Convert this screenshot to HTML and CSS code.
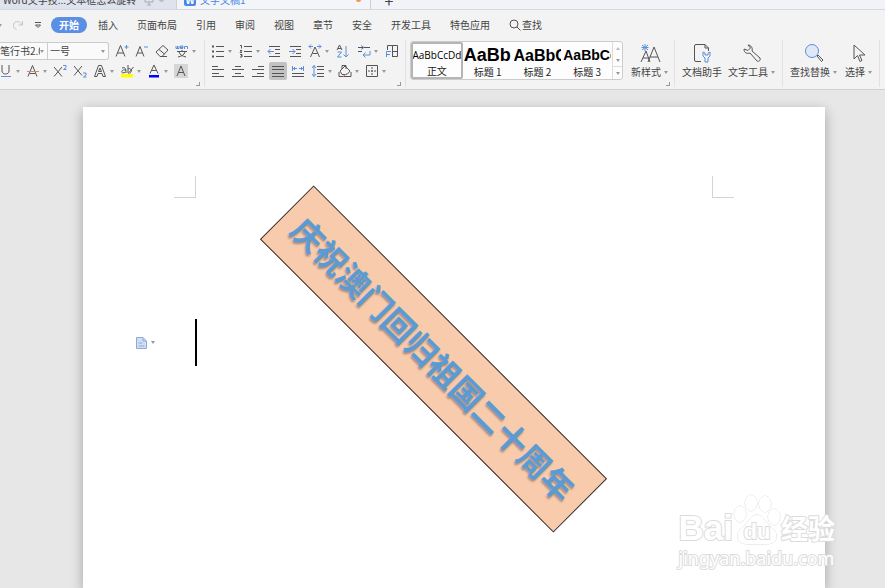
FILE: index.html
```html
<!DOCTYPE html>
<html lang="zh">
<head>
    <meta charset="UTF-8">
    <title>文字文稿1</title>
    <link rel="stylesheet" href="styles.css">
</head>
<body>
    <!-- 文档标签 -->
    <div class="tabs">
        <a href="#" class="tab">
            <span>Word文字技...文本框怎么旋转</span>
            <svg class="tab-screen" width="10" height="12" viewBox="0 0 10 12"><path d="M1 2h8v6H1zM5 8v3M3 11h4"/></svg>
            <i class="dot gray"></i>
        </a>
        <a href="#" class="tab on">
            <b class="logo">W</b>
            <span>文字文稿1</span>
            <i class="dot"></i>
        </a>
        <button class="add" aria-label="新建">+</button>
    </div>

    <!-- 菜单 -->
    <div class="menu">
        <div class="quick">
            <i class="caret"></i>
            <button aria-label="恢复"><svg width="12" height="12" viewBox="0 0 12 12" class="pale"><path d="M10.500 2v4H6.500M10 6C8 1 1 2 1.500 6.500c0 2 1 3 3 4"/></svg></button>
            <button aria-label="自定义"><svg width="8" height="8" viewBox="0 0 8 8"><path d="M1 1.500h6M1.500 4h5L4 6.500z"/></svg></button>
        </div>
        <a href="#" class="on">开始</a>
        <a href="#">插入</a>
        <a href="#">页面布局</a>
        <a href="#">引用</a>
        <a href="#">审阅</a>
        <a href="#">视图</a>
        <a href="#">章节</a>
        <a href="#">安全</a>
        <a href="#">开发工具</a>
        <a href="#">特色应用</a>
        <button class="search"><svg width="12" height="12" viewBox="0 0 12 12"><circle cx="5" cy="5" r="4"/><path d="M8 8l3.500 3.500"/></svg>查找</button>
    </div>

    <!-- 工具栏 -->
    <div class="ribbon">
        <div class="group font">
            <div class="row">
                <div class="selects">
                    <label><select class="family" aria-label="字体"><option>笔行书2.0</option></select><i class="caret"></i></label>
                    <label><select class="size" aria-label="字号"><option>一号</option></select><i class="caret"></i></label>
                </div>
                <button aria-label="增大字号"><svg width="14" height="14" viewBox="0 0 14 14"><path d="M1 12.500L5.500 1.500l4.500 11M2.500 9h6"/><path class="blue" d="M9.500 3h4M11.500 1v4"/></svg></button>
                <button aria-label="减小字号"><svg width="14" height="14" viewBox="0 0 14 14"><path d="M1 12.500L5 2.500l4 10M2.500 9h5"/><path class="blue" d="M9 3h4"/></svg></button>
                <button aria-label="清除格式"><svg width="14" height="14" viewBox="0 0 14 14"><path d="M1 8l7-6.500 5 4.500-6 6.500H5zM4 5.500l5.500 4.500M6 12.500h6"/></svg></button>
                <button aria-label="拼音指南"><svg width="14" height="14" viewBox="0 0 14 14"><path class="blue" d="M1 2v2.500h3V2M2.500 2v2M5.500 3.500H8V2H5.500v2.500H8M9.500 5V2.500h3V5"/><path d="M2 7.500h10M7 6v1M4 8c1 3 3 4 7 5M10 8c-1 3-3 4-7 5"/></svg><i class="caret"></i></button>
            </div>
            <div class="row second">
                <button aria-label="下划线"><svg width="14" height="14" viewBox="0 0 14 14"><path d="M3 1v6c0 4 7 4 7 0V1"/><path class="blue" d="M2 12.500h10"/></svg><i class="caret"></i></button>
                <button aria-label="删除线"><svg width="14" height="14" viewBox="0 0 14 14"><path d="M2 12.500L6.500 1.500 11 12.500M4 9.500h5"/><path class="red" d="M1 7.500h12"/></svg><i class="caret"></i></button>
                <button aria-label="上标"><svg width="14" height="14" viewBox="0 0 14 14"><path d="M1 3l8 9.500M9 3l-8 9.500"/><path class="blue" d="M10 1.500h3v2l-2.500 2H13.500"/></svg></button>
                <button aria-label="下标"><svg width="14" height="14" viewBox="0 0 14 14"><path d="M1 2l8 9.500M9 2l-8 9.500"/><path class="blue" d="M10 9h3v2l-2.500 2H13.500"/></svg></button>
                <button aria-label="文字效果"><svg width="14" height="14" viewBox="0 0 14 14"><path d="M1.500 12.500l4-11h3l4 11h-2.500L9 9.500H5l-1 3zM5.500 7.500L7 4l1.500 3.500z"/></svg><i class="caret"></i></button>
                <button aria-label="突出显示"><svg width="14" height="14" viewBox="0 0 14 14"><path class="yellow" d="M1 10h12v3.500H1z"/><path d="M2 4c3-1 4 0 4 5M6 6C1 5 1 9 3 9l2.500-1M8 1v8c5 1 4-6 0-4M13.500 3l-4 5"/></svg><i class="caret"></i></button>
                <button aria-label="字体颜色"><svg width="14" height="14" viewBox="0 0 14 14"><path d="M3 9.500L7 1l4 8.500M4.500 6.500h5"/><path class="ink" d="M2 11h10v2.500H2z"/></svg><i class="caret"></i></button>
                <button class="shade" aria-label="字符底纹"><svg width="14" height="14" viewBox="0 0 14 14"><path d="M3 12L7 2l4 10M4.500 8.500h5"/></svg></button>
            </div>
            <i class="corner"></i>
        </div>

        <div class="group para">
            <div class="row spread">
                <button aria-label="项目符号"><svg width="14" height="14" viewBox="0 0 14 14"><path d="M1 2.500h2M1 7.500h2M1 12.500h2" stroke-width="2"/><path d="M5 2.500h8M5 7.500h8M5 12.500h8"/></svg><i class="caret"></i></button>
                <button aria-label="编号"><svg width="14" height="14" viewBox="0 0 14 14"><path d="M1 1.500h1.500v3M1 6.500h2L1 8.500h2M1 10.500h2v1H2h1v1.500H1M5 2.500h8M5 7.500h8M5 12.500h8"/></svg><i class="caret"></i></button>
                <button aria-label="减少缩进"><svg width="14" height="14" viewBox="0 0 14 14"><path d="M2 2.500h11M8 5.500h5M8 9.500h5M2 12.500h11"/><path class="blue" d="M7 7.500H1M3.500 5L1 7.500 3.500 10"/></svg></button>
                <button aria-label="增加缩进"><svg width="14" height="14" viewBox="0 0 14 14"><path d="M2 2.500h11M8 5.500h5M8 9.500h5M2 12.500h11"/><path class="blue" d="M1 7.500h6M4.500 5L7 7.500 4.500 10"/></svg></button>
                <button aria-label="中文版式"><svg width="14" height="14" viewBox="0 0 14 14"><path d="M2.500 13L7 3l4.500 10M4.500 9.500h5"/><path class="blue" d="M1 2.500h4M3 .500L1 2.500l2 2M9 2.500h4M11 .500l2 2-2 2"/></svg><i class="caret"></i></button>
                <button aria-label="排序"><svg width="14" height="14" viewBox="0 0 14 14"><path d="M1 6l2.500-5L6 6M2 4.500h3"/><path class="blue" d="M1.500 8h4l-4 5h4M10 2v11M7.500 10.500L10 13l2.500-2.500"/></svg></button>
                <button aria-label="换行"><svg width="14" height="14" viewBox="0 0 14 14"><path d="M1 3.500h12M1 7.500h4"/><path class="blue" d="M4 1.500l3 2-3 2M13 7v4H6M8.500 8.500L6 11l2.500 2.500"/></svg><i class="caret"></i></button>
                <button aria-label="段落布局"><svg width="14" height="14" viewBox="0 0 14 14"><path d="M2.500 6V1.500h10v11H7M7.500 2v10M7 7.500h5"/><path class="blue" d="M1.500 13V7.500H6M2 10.500h3"/></svg></button>
            </div>
            <div class="row">
                <button aria-label="左对齐"><svg width="14" height="14" viewBox="0 0 14 14"><path d="M1 2.500h6M1 5.500h12M1 9.500h7M1 12.500h12"/></svg></button>
                <button aria-label="居中"><svg width="14" height="14" viewBox="0 0 14 14"><path d="M4 2.500h6M1 5.500h12M4 9.500h6M1 12.500h12"/></svg></button>
                <button aria-label="右对齐"><svg width="14" height="14" viewBox="0 0 14 14"><path d="M7 2.500h6M1 5.500h12M6 9.500h7M1 12.500h12"/></svg></button>
                <button class="pressed" aria-label="两端对齐"><svg width="14" height="14" viewBox="0 0 14 14"><path d="M1 2.500h12M1 5.500h12M1 9.500h12M1 12.500h12"/></svg></button>
                <button aria-label="分散对齐"><svg width="14" height="14" viewBox="0 0 14 14"><path d="M1 9.500h12M1 12.500h12"/><path class="blue" d="M1.500 2v5M12.500 2v5M2 4.500h4M4 3L2.500 4.500 4 6M8 4.500h4M10 3l1.500 1.500L10 6"/></svg></button>
                <button aria-label="行距"><svg width="14" height="14" viewBox="0 0 14 14"><path d="M6 2.500h7M6 5.500h7M6 9.500h7M6 12.500h7"/><path class="blue" d="M3 1.500v11M1 4l2-2.500L5 4M1 10l2 2.500L5 10"/></svg><i class="caret"></i></button>
                <button aria-label="底纹颜色"><svg width="14" height="14" viewBox="0 0 14 14"><path d="M2 7l5-5 5 5-3 3.500H4zM4 5V1.500h4V5M1 8v4.500h12V8"/><path class="red" d="M5 12.500l4-3"/></svg><i class="caret"></i></button>
                <button aria-label="边框"><svg width="14" height="14" viewBox="0 0 14 14"><path d="M1.500 1.500h11v11h-11z"/><path d="M7 3v8M3 7h8" stroke-dasharray="2 1"/></svg><i class="caret"></i></button>
            </div>
            <i class="corner"></i>
        </div>

        <div class="group styles">
            <div class="gallery">
                <button class="style on"><span class="body-text">AaBbCcDd</span>正文</button>
                <button class="style"><span class="h1">AaBb</span>标题 1</button>
                <button class="style"><span class="h2">AaBbC</span>标题 2</button>
                <button class="style"><span class="h3">AaBbCc</span>标题 3</button>
                <div class="scroll">
                    <button aria-label="上"><i class="caret up"></i></button>
                    <button aria-label="下"><i class="caret"></i></button>
                    <button class="more" aria-label="更多"><i class="caret"></i></button>
                </div>
            </div>
            <button class="big"><svg width="22" height="20" viewBox="0 0 22 20"><path d="M2 19l5-11 4 11M4 15h6M9 19l6-15 6 15M11 14h8"/><path class="blue" d="M6 1v7M3 2l6 5M9 2L3 7M2.500 4.500h7"/></svg><span>新样式<i class="caret"></i></span></button>
            <i class="corner"></i>
        </div>

        <div class="group tools">
            <button class="big"><svg width="18" height="20" viewBox="0 0 18 20"><path d="M8 18.500H3q-1.500 0-1.500-1.500V3q0-1.500 1.500-1.500h9L15.500 5v3M12 1.500V5h3.500"/><path class="blue" d="M10 9v4l2 2v4h3v-4l2-2V9l-2 1v2h-3v-2z"/></svg><span>文档助手</span></button>
            <button class="big"><svg width="20" height="20" viewBox="0 0 20 20"><path d="M2 6c0 4 3 5 6 4l7 8c1 1 4 0 3-3l-8-7c1-3-1-6-4-6l2.500 3L6 7.500z"/></svg><span>文字工具<i class="caret"></i></span></button>
        </div>

        <div class="group tools last">
            <button class="big"><svg width="20" height="20" viewBox="0 0 20 20"><circle class="lens" cx="8" cy="8" r="6.500"/><path d="M13 13l1-1 5 5-1.500 1.500z"/></svg><span>查找替换<i class="caret"></i></span></button>
            <button class="big"><svg width="16" height="20" viewBox="0 0 16 20"><path d="M3 2v14l3.500-3.500L9 18.500l2-1-2.500-5.500H14z"/></svg><span>选择<i class="caret"></i></span></button>
        </div>
    </div>

    <!-- 文档 -->
    <div class="desk">
        <div class="page">
            <div class="marks">
                <i class="mark left"></i>
                <i class="mark right"></i>
            </div>
            <div class="line">
                <button class="paste" aria-label="粘贴选项">
                    <svg width="11" height="12" viewBox="0 0 11 12"><path class="sheet" d="M.5.500H7L10.500 4v7.500H.5z"/><path d="M7 1v3h3M2.500 6h4M2.500 9h6"/></svg>
                    <i class="caret"></i>
                </button>
                <i class="cursor"></i>
            </div>
            <div class="textbox">庆祝澳门回归祖国二十周年</div>
        </div>
    </div>

    <!-- 水印 -->
    <div class="watermark">
        <div class="brand">
            <span>Bai</span>
            <svg width="48" height="52" viewBox="0 0 48 52">
                <ellipse cx="7" cy="20" rx="6" ry="8"/>
                <ellipse cx="18" cy="9" rx="6" ry="8"/>
                <ellipse cx="32" cy="10" rx="6" ry="8"/>
                <ellipse cx="41" cy="23" rx="6" ry="8"/>
                <path d="M24 21c-5 0-7 4-11 9-5 5-10 8-8 15 2 6 10 5 19 5s17 1 19-5c2-7-3-10-8-15-4-5-6-9-11-9z"/>
                <text x="24" y="45" text-anchor="middle">du</text>
            </svg>
            <span class="cn">经验</span>
        </div>
        <div class="site">jingyan.baidu.com</div>
    </div>
</body>
</html>
```
FILE: styles.css
```css
* {
    margin: 0;
    padding: 0;
    box-sizing: border-box;
}
body {
    display: flex;
    flex-direction: column;
    height: 100vh;
    overflow: hidden;
    background-color: #e7e7e7;
    font: 10px/12px "Noto Sans CJK SC", sans-serif;
    color: #444;
}
a {
    text-decoration: none;
    color: inherit;
}
button, select {
    border: none;
    background: none;
    font: inherit;
    color: inherit;
}
svg {
    flex: none;
    fill: none;
    stroke: #555;
}
.blue {
    stroke: #5b8edb;
}
.red {
    stroke: #dc8078;
}
.pale {
    stroke: #c4c4c4;
}
.yellow {
    fill: #ff0;
    stroke: none;
}
.ink {
    fill: #00f;
    stroke: none;
}
.lens {
    fill: #dfe8f6;
    stroke: #5b8edb;
}
.caret {
    flex: none;
    width: 4px;
    border: 2px solid transparent;
    border-top: 3px solid #999;
    border-bottom: none;
}
.caret.up {
    border-top: none;
    border-bottom: 3px solid #bbb;
}

/* 标签栏 */
.tabs {
    display: flex;
    flex: none;
    align-items: flex-end;
    height: 10px;
    overflow: hidden;
    border-bottom: 1px solid #d5d8df;
    background-color: #f2f3f8;
}
.tab {
    display: flex;
    flex: none;
    align-items: center;
    width: 177px;
    height: 19px;
    padding-left: 3px;
    border-right: 1px solid #cbd0dc;
    background-color: #dfe3ed;
    white-space: nowrap;
}
.tab.on {
    width: 194px;
    padding-left: 7px;
    background-color: #f4f5f9;
    color: #4a86e8;
}
.tab-screen {
    margin-left: 8px;
    stroke: #aaa;
}
.logo {
    width: 12px;
    height: 12px;
    margin-right: 4px;
    border-radius: 2px;
    background-color: #4a86e8;
    color: #fff;
    text-align: center;
}
.dot {
    width: 5px;
    height: 5px;
    margin: 0 9px 0 auto;
    border-radius: 50%;
    background-color: #ec9543;
}
.dot.gray {
    margin-right: 12px;
    background-color: #bbb;
}
.add {
    width: 36px;
    height: 19px;
    font-size: 16px;
}

/* 菜单 */
.menu {
    display: flex;
    flex: none;
    align-items: center;
    gap: 19px;
    height: 30px;
    background-color: #f3f3f3;
    white-space: nowrap;
}
.quick {
    display: flex;
    align-items: center;
    gap: 10px;
    width: 32px;
    margin-left: -2px;
}
.quick button {
    display: flex;
}
.menu .on {
    margin: 0 -8px 0 2px;
    padding: 2px 8px;
    border-radius: 8px;
    background-color: #5a8fe6;
    color: #fff;
    font-weight: bold;
}
.search {
    display: flex;
    align-items: center;
    gap: 1px;
}

/* 工具栏 */
.ribbon {
    display: flex;
    flex: none;
    height: 50px;
    padding-bottom: 2px;
    border-bottom: 1px solid #d0d0d0;
    background-color: #f3f3f3;
    white-space: nowrap;
}
.group {
    position: relative;
    flex: none;
    padding-top: 1px;
    border-right: 1px solid #e2e2e2;
}
.corner {
    position: absolute;
    right: 4px;
    bottom: 1px;
    width: 4px;
    height: 4px;
    border: solid #999;
    border-width: 0 1px 1px 0;
}
.row {
    display: flex;
    align-items: center;
    gap: 6px;
    height: 20px;
}
.row button {
    display: flex;
    flex: none;
    align-items: center;
    gap: 3px;
}
.row.spread {
    gap: 0;
    justify-content: space-between;
}
.font {
    width: 205px;
}
.second {
    margin-left: -1px;
}
.selects {
    display: flex;
    height: 18px;
    border: 1px solid #ccc;
    border-left: none;
    border-radius: 0 3px 3px 0;
    background-color: #fafafa;
}
.selects label {
    display: flex;
    align-items: center;
    padding-right: 3px;
}
.selects label + label {
    border-left: 1px solid #ccc;
}
.selects select {
    appearance: none;
    overflow: hidden;
}
.family {
    width: 40px;
}
.size {
    width: 53px;
    padding-left: 2px;
}
.row .shade {
    background-color: #d6d6d6;
}
.row .pressed {
    margin: 0 -2px;
    padding: 2px;
    border-radius: 2px;
    background-color: #c2c2c2;
}
.para {
    width: 201px;
    padding-right: 6px;
    padding-left: 6px;
}
.styles {
    display: flex;
    align-items: flex-start;
    gap: 8px;
    padding-right: 6px;
    padding-left: 4px;
}
.gallery {
    display: flex;
    width: 213px;
    height: 39px;
    border: 1px solid #ccc;
    border-radius: 3px;
    background-color: #fdfdfd;
}
.style {
    display: flex;
    flex: 1;
    flex-direction: column;
    min-width: 0;
    align-items: center;
    overflow: hidden;
    border: 1px solid transparent;
    color: #222;
}
.style.on {
    border: 2px solid #b5b5b5;
    border-radius: 2px;
}
.style span {
    align-self: flex-start;
    max-width: 100%;
    height: 23px;
    overflow: hidden;
    font: bold 18px/25px "Liberation Sans", sans-serif;
    color: #000;
}
.style .h2 {
    font-size: 16px;
}
.style .h3 {
    font-size: 14px;
}
.style .body-text {
    align-self: center;
    max-width: none;
    height: 22px;
    font: 10px/22px "Open Sans", sans-serif;
}
.scroll {
    display: flex;
    flex-direction: column;
    width: 10px;
    border-left: 1px solid #ddd;
}
.scroll button {
    display: flex;
    flex: 1;
    align-items: center;
    justify-content: center;
}
.scroll .more {
    border-top: 1px solid #ddd;
}
.big {
    display: flex;
    flex-direction: column;
    align-items: center;
    gap: 3px;
    padding-top: 2px;
}
.big span {
    display: flex;
    align-items: center;
    gap: 3px;
}
.tools {
    display: flex;
    align-items: flex-start;
    gap: 6px;
    padding: 1px 7px 0 7px;
}
.last {
    gap: 8px;
}

/* 文档区 */
.desk {
    flex: 1;
    min-height: 0;
    padding: 17px 60px 0 83px;
}
.page {
    position: relative;
    height: 100%;
    padding: 69px 91px 0 53px;
    background-color: #fff;
    box-shadow: 0 4px 12px rgba(0, 0, 0, .3);
}
.marks {
    display: flex;
    justify-content: space-between;
    padding-left: 38px;
}
.mark {
    width: 22px;
    height: 22px;
    border: solid #d4d4d4;
}
.mark.left {
    border-width: 0 1px 1px 0;
}
.mark.right {
    border-width: 0 0 1px 1px;
}
.line {
    display: flex;
    align-items: center;
    gap: 40px;
    margin-top: 121px;
}
.paste {
    display: flex;
    align-items: center;
    gap: 4px;
}
.paste svg {
    stroke: #8ba8dc;
}
.sheet {
    fill: #d3def2;
}
.cursor {
    width: 2px;
    height: 47px;
    background-color: #000;
}
.textbox {
    position: absolute;
    top: 214px;
    left: 143px;
    width: 415px;
    height: 76px;
    border: 1px solid #333;
    background-color: #f8cbad;
    font: bold 32px/72px "Noto Sans CJK SC", sans-serif;
    text-align: center;
    color: #5b9bd5;
    text-shadow: 1px 2px 2px rgba(0, 0, 0, .3);
    white-space: nowrap;
    transform: rotate(45deg);
}

/* 水印 */
.watermark {
    position: absolute;
    right: 50px;
    bottom: 18px;
    color: #fff;
    -webkit-text-stroke: 2px #dcdcdc;
    paint-order: stroke fill;
}
.brand {
    display: flex;
    align-items: flex-end;
    justify-content: flex-end;
    font: bold 35px/36px "Liberation Sans", sans-serif;
}
.brand svg {
    fill: #fff;
    stroke: #dcdcdc;
}
.brand text {
    font-size: 22px;
    stroke-width: 2px;
}
.brand .cn {
    font: bold 27px/36px "Noto Sans CJK SC", sans-serif;
}
.site {
    font: 18px/24px "Noto Sans", sans-serif;
}
```
